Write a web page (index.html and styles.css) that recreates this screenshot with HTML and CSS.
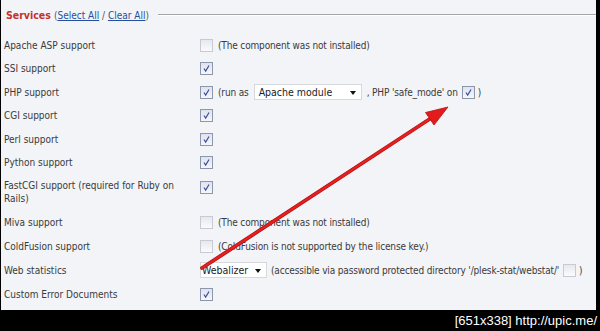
FILE: index.html
```html
<!DOCTYPE html>
<html>
<head>
<meta charset="utf-8">
<link rel="stylesheet" href="styles.css">
</head>
<body>
<div class="shot">
  <div class="frame">
    <div class="legend">
      <span class="title">Services</span>
      <span class="links">(<a href="#">Select All</a> / <a href="#">Clear All</a>)</span>
      <span class="rule"></span>
    </div>
    <div class="rows">
      <div class="row">
        <div class="label">Apache ASP support</div>
        <div class="value"><span class="cb"></span><span class="note">(The component was not installed)</span></div>
      </div>
      <div class="row">
        <div class="label">SSI support</div>
        <div class="value"><span class="cb on"><svg viewBox="0 0 13 13"><path d="M3.5 6.5 L5.5 9.5 L9.5 3"/></svg></span></div>
      </div>
      <div class="row">
        <div class="label">PHP support</div>
        <div class="value"><span class="cb on"><svg viewBox="0 0 13 13"><path d="M3.5 6.5 L5.5 9.5 L9.5 3"/></svg></span><span class="note">(run as</span><span class="select php">Apache module<i class="caret"></i></span><span class="note tight">, PHP 'safe_mode' on</span><span class="cb on"><svg viewBox="0 0 13 13"><path d="M3.5 6.5 L5.5 9.5 L9.5 3"/></svg></span><span class="note close">)</span></div>
      </div>
      <div class="row">
        <div class="label">CGI support</div>
        <div class="value"><span class="cb on"><svg viewBox="0 0 13 13"><path d="M3.5 6.5 L5.5 9.5 L9.5 3"/></svg></span></div>
      </div>
      <div class="row">
        <div class="label">Perl support</div>
        <div class="value"><span class="cb on"><svg viewBox="0 0 13 13"><path d="M3.5 6.5 L5.5 9.5 L9.5 3"/></svg></span></div>
      </div>
      <div class="row">
        <div class="label">Python support</div>
        <div class="value"><span class="cb on"><svg viewBox="0 0 13 13"><path d="M3.5 6.5 L5.5 9.5 L9.5 3"/></svg></span></div>
      </div>
      <div class="row tall">
        <div class="label">FastCGI support (required for Ruby on Rails)</div>
        <div class="value"><span class="cb on"><svg viewBox="0 0 13 13"><path d="M3.5 6.5 L5.5 9.5 L9.5 3"/></svg></span></div>
      </div>
      <div class="row">
        <div class="label">Miva support</div>
        <div class="value"><span class="cb"></span><span class="note">(The component was not installed)</span></div>
      </div>
      <div class="row">
        <div class="label">ColdFusion support</div>
        <div class="value"><span class="cb"></span><span class="note">(ColdFusion is not supported by the license key.)</span></div>
      </div>
      <div class="row stats">
        <div class="label">Web statistics</div>
        <div class="value"><span class="select web">Webalizer<i class="caret"></i></span><span class="note narrow">(accessible via password protected directory '/plesk-stat/webstat/'</span><span class="cb"></span><span class="note close">)</span></div>
      </div>
      <div class="row">
        <div class="label">Custom Error Documents</div>
        <div class="value"><span class="cb on"><svg viewBox="0 0 13 13"><path d="M3.5 6.5 L5.5 9.5 L9.5 3"/></svg></span></div>
      </div>
    </div>
  </div>
  <div class="footer">[651x338] http://upic.me/</div>
  <svg class="arrow" width="600" height="331" viewBox="0 0 600 331">
    <line x1="202" y1="268" x2="432" y2="117.5" stroke="#b81212" stroke-width="3.8" stroke-linecap="round"/>
    <line x1="202" y1="268" x2="432" y2="117.5" stroke="#e42020" stroke-width="2.2" stroke-linecap="round"/>
    <polygon points="448,107 434,125 425.5,112.5" fill="#e21c1c" stroke="#b51010" stroke-width="0.8"/>
  </svg>
</div>
</body>
</html>
```
FILE: styles.css
```css
html, body {
  margin: 0;
  padding: 0;
  background: #000;
}
.shot {
  position: relative;
  width: 600px;
  height: 331px;
  overflow: hidden;
  background: #000;
}
.frame {
  width: 595px;
  height: 310px;
  margin-left: 1px;
  background: #f3f4f8;
  font-family: "DejaVu Sans Condensed", "DejaVu Sans", sans-serif;
  font-size: 10px;
  color: #3a3a3a;
}
.legend {
  display: flex;
  align-items: center;
  height: 30px;
  padding-left: 5px;
}
.title {
  color: #c3302d;
  font-weight: bold;
  font-size: 10.5px;
}
.links {
  margin-left: 3px;
  color: #555;
}
.links a {
  color: #244f9e;
  text-decoration: underline;
}
.rule {
  flex: 1;
  margin-left: 9px;
  border-top: 1px solid #a3a5a9;
  border-bottom: 1px solid #ffffff;
}
.rows {
  padding-top: 3.25px;
}
.row {
  display: grid;
  grid-template-columns: 196px 1fr;
  height: 23.5px;
  align-items: center;
  padding-left: 3px;
}
.row.tall {
  height: 36.5px;
  align-items: start;
}
.row.tall .label,
.row.tall .value {
  padding-top: 5px;
}
.row.stats {
  height: 25px;
}
.label {
  line-height: 13px;
  padding-right: 12px;
}
.value {
  display: flex;
  align-items: center;
  height: 16px;
}
.cb {
  display: inline-block;
  box-sizing: border-box;
  width: 13px;
  height: 13px;
  border: 1px solid #c6cad2;
  background: linear-gradient(#e6e8ee, #fbfbfd);
}
.cb.on {
  border-color: #8c97ac;
  background: linear-gradient(#dfe3ee, #f6f7fb);
}
.cb svg {
  display: block;
  width: 11px;
  height: 11px;
}
.cb svg path {
  fill: none;
  stroke: #3c4c9c;
  stroke-width: 1.4;
}
.note {
  margin-left: 5px;
  white-space: nowrap;
  letter-spacing: -0.15px;
}
.note.tight {
  margin-left: 5px;
  margin-right: 4px;
}
.note.narrow {
  margin-left: 4px;
  margin-right: 4px;
}
.note.close {
  margin-left: 3px;
}
.select {
  position: relative;
  box-sizing: border-box;
  height: 16px;
  line-height: 14px;
  padding-left: 4px;
  background: #fff;
  border: 1px solid #d6d8dc;
  color: #222;
  font-size: 10.5px;
}
.select.php {
  width: 108px;
  margin-left: 5px;
}
.select.web {
  width: 67px;
  padding-left: 1px;
}
.caret {
  position: absolute;
  right: 5px;
  top: 6px;
  width: 0;
  height: 0;
  border-left: 3.5px solid transparent;
  border-right: 3.5px solid transparent;
  border-top: 4px solid #111;
}
.footer {
  height: 21px;
  line-height: 21px;
  text-align: right;
  padding-right: 3px;
  color: #fff;
  font-family: "Liberation Sans", sans-serif;
  font-size: 13px;
}
.arrow {
  position: absolute;
  left: 0;
  top: 0;
  pointer-events: none;
}
```
